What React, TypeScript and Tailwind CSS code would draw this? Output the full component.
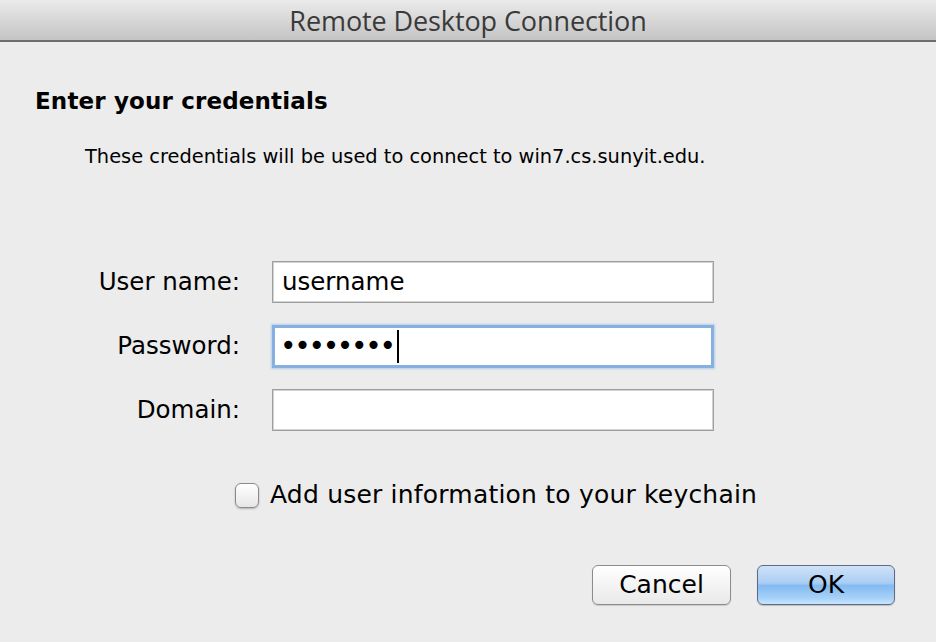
import React from "react";

const font = { fontFamily: '"DejaVu Sans", "Lucida Grande", sans-serif' };

function Field({ label, children, focused }: { label: string; children?: React.ReactNode; focused?: boolean }) {
  return (
    <div className="flex items-center h-[42px]">
      <div className="w-[240px] text-right text-[24.5px] text-black">{label}</div>
      <div className="w-[32px]" />
      <div
        className={
          focused
            ? "w-[442px] h-[43px] bg-white border-[3px] border-[#86afe2] shadow-[0_0_2px_1px_#b4cdec] flex items-center pl-[5px]"
            : "w-[442px] h-[42px] bg-white border border-[#9f9f9f] shadow-[inset_0_0_0_1px_#d2d2d2] flex items-center pl-[9px]"
        }
      >
        {children}
      </div>
    </div>
  );
}

export default function App() {
  return (
    <div className="w-[936px] h-[642px] bg-[#ececec] flex flex-col overflow-hidden" style={font}>
      <div className="h-[42px] bg-gradient-to-b from-[#ebebeb] to-[#c4c4c4] border-b-2 border-[#6e6e6e] flex items-center justify-center">
        <span className="text-[27px] leading-none text-[#3a3a3a] tracking-[-0.1px]" style={{ fontFamily: '"Open Sans", sans-serif' }}>
          Remote Desktop Connection
        </span>
      </div>
      <div className="pl-[35px] pt-[44px]">
        <div className="text-[23px] font-bold text-black leading-[30px] tracking-[0.15px]">Enter your credentials</div>
        <div className="pl-[50px] mt-[29px] text-[19.4px] text-black leading-[24px]">
          These credentials will be used to connect to win7.cs.sunyit.edu.
        </div>
      </div>
      <div className="mt-[92px] flex flex-col gap-[22px]">
        <Field label="User name:">
          <span className="text-[24.5px] text-black">username</span>
        </Field>
        <Field label="Password:" focused>
          <span className="text-[28px] text-black tracking-[-2.3px] leading-none">••••••••</span>
          <span className="w-[2px] h-[33px] bg-black ml-[3px]" />
        </Field>
        <Field label="Domain:" />
      </div>
      <div className="mt-[51px] h-[26px] flex items-center pl-[235px]">
        <div className="w-[24px] h-[25px] rounded-[6px] border border-[#8a8a8a] bg-gradient-to-b from-white to-[#e6e6e6] shadow-[0_1px_2px_rgba(0,0,0,0.25)]" />
        <span className="ml-[11px] text-[25px] text-black tracking-[0.2px]">Add user information to your keychain</span>
      </div>
      <div className="mt-[57px] flex justify-end pr-[41px] gap-[26px]">
        <button className="w-[139px] h-[40px] rounded-[6px] border border-[#8c8c8c] bg-gradient-to-b from-white via-[#f4f4f4] to-[#e9e9e9] text-[25px] text-black shadow-[0_1px_1px_rgba(0,0,0,0.15)]" style={font}>
          Cancel
        </button>
        <button className="w-[138px] h-[40px] rounded-[6px] border border-[#5f6a87] text-[25px] text-black shadow-[0_1px_1px_rgba(0,0,0,0.2)] bg-[linear-gradient(to_bottom,#cfe2f8_0%,#a9cdf3_45%,#83baf0_52%,#a7d2f8_85%,#c9e6fd_100%)]" style={font}>
          OK
        </button>
      </div>
    </div>
  );
}
